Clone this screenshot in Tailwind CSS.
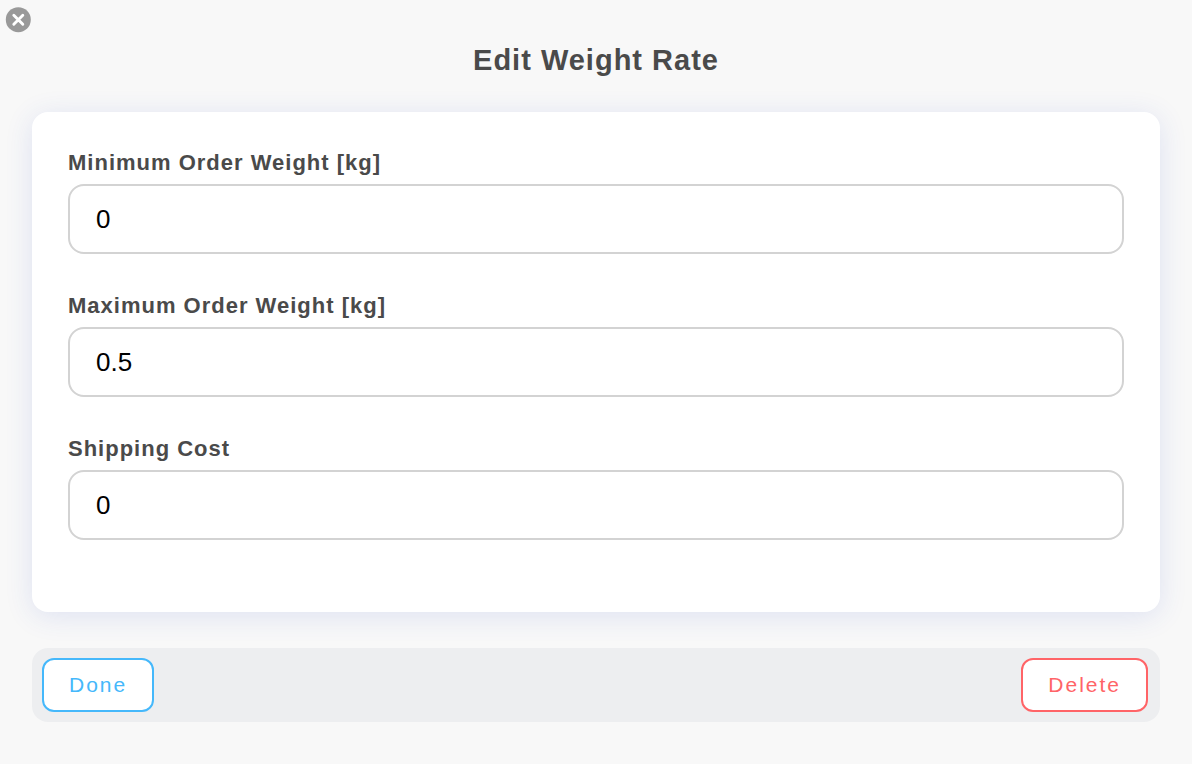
<!DOCTYPE html>
<html lang="en">
<head>
    <meta charset="UTF-8">
    <meta name="viewport" content="width=device-width, initial-scale=1.0">
    <title>Edit Weight Rate</title>
    <script src="https://cdn.jsdelivr.net/npm/@tailwindcss/browser@4"></script>
    <style>
        body {
            font-family: 'Liberation Sans', Arial, sans-serif;
        }
    </style>
</head>
<body class="bg-[#f8f8f8] min-h-screen relative px-8 pt-10 pb-10 text-[#4a4a4a]">
    <button type="button" aria-label="Close" class="absolute top-[7px] left-[5px] rounded-full">
        <svg class="size-[26px]" viewBox="0 0 26 26" fill="none">
            <circle cx="13.3" cy="12.7" r="12.5" fill="#999"/>
            <path d="M8.8 8.2l9 9M17.8 8.2l-9 9" stroke="#fff" stroke-width="2.9" stroke-linecap="round"/>
        </svg>
    </button>
    <h1 class="text-center text-[29px] leading-10 font-bold tracking-[1px]">Edit Weight Rate</h1>

    <form id="rate-form">
        <div class="mt-8 bg-white rounded-2xl shadow-[0_4px_28px_rgba(50,80,200,0.13)] px-9 pt-9 pb-[72px] space-y-[37px]">
            <div>
                <label for="min_weight" class="block text-[22px] leading-[30px] font-bold tracking-[1px] mb-[6px]">Minimum Order Weight [kg]</label>
                <input type="text" id="min_weight" name="min_weight" value="0" class="block w-full h-[70px] px-[26px] bg-white text-black text-[26px] border-2 border-[#d3d3d3] rounded-2xl focus:outline-none">
            </div>
            <div>
                <label for="max_weight" class="block text-[22px] leading-[30px] font-bold tracking-[1px] mb-[6px]">Maximum Order Weight [kg]</label>
                <input type="text" id="max_weight" name="max_weight" value="0.5" class="block w-full h-[70px] px-[26px] bg-white text-black text-[26px] border-2 border-[#d3d3d3] rounded-2xl focus:outline-none">
            </div>
            <div>
                <label for="shipping_cost" class="block text-[22px] leading-[30px] font-bold tracking-[1px] mb-[6px]">Shipping Cost</label>
                <input type="text" id="shipping_cost" name="shipping_cost" value="0" class="block w-full h-[70px] px-[26px] bg-white text-black text-[26px] border-2 border-[#d3d3d3] rounded-2xl focus:outline-none">
            </div>
        </div>

        <div class="mt-9 bg-[#edeef0] rounded-2xl py-[10px] pl-[10px] pr-3 flex justify-between">
            <button type="submit" class="h-[54px] px-[25px] bg-white border-2 border-[#45b8fb] text-[#45b8fb] text-[21px] tracking-[2px] rounded-xl">Done</button>
            <button type="button" class="h-[54px] px-[25px] bg-white border-2 border-[#ff6467] text-[#ff6467] text-[21px] tracking-[2px] rounded-xl">Delete</button>
        </div>
    </form>
</body>
</html>
